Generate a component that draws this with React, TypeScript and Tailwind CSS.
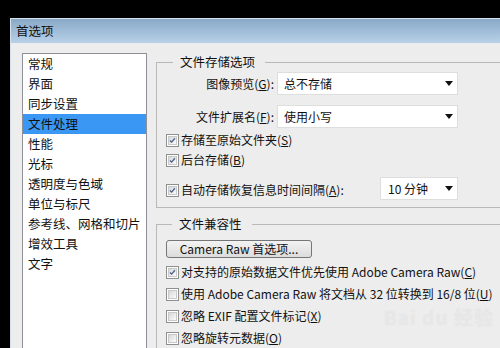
import React from "react";

const FONT = '"Noto Sans CJK SC", "Noto Sans", sans-serif';

function Check({ checked }: { checked?: boolean }) {
  return (
    <div className="w-[13px] h-[13px] shrink-0 border border-[#8e8f8f] bg-white p-[1px]">
      <div className="w-full h-full border border-[#c9c9c9] bg-gradient-to-br from-[#d8d8d8] to-[#fbfbfb] flex items-center justify-center">
        {checked && (
          <svg width="9" height="9" viewBox="0 0 9 9">
            <path d="M1.3 4.4 L3.4 6.6 L7.6 1.6" fill="none" stroke="#4a5e8a" strokeWidth="1.7" />
          </svg>
        )}
      </div>
    </div>
  );
}

function Arrow() {
  return (
    <svg width="8" height="5" viewBox="0 0 8 5" className="shrink-0">
      <path d="M0 0 H8 L4 5 Z" fill="#111" />
    </svg>
  );
}

function Select({ text, w, pl }: { text: string; w: string; pl: string }) {
  return (
    <div className={`${w} h-[23px] bg-white border border-[#dedede] flex items-center ${pl} pr-[4px]`}>
      <span className="flex-1 text-[12px] leading-[16px] text-[#111]">{text}</span>
      <Arrow />
    </div>
  );
}

function CheckRow({ checked, children, h = "h-[20px]" }: { checked?: boolean; children: React.ReactNode; h?: string }) {
  return (
    <div className={`${h} flex items-center gap-[2px] whitespace-nowrap`}>
      <Check checked={checked} />
      <span className="text-[12px] leading-[16px] text-[#111]">{children}</span>
    </div>
  );
}

const items = [
  "常规",
  "界面",
  "同步设置",
  "文件处理",
  "性能",
  "光标",
  "透明度与色域",
  "单位与标尺",
  "参考线、网格和切片",
  "增效工具",
  "文字",
];

export default function App() {
  return (
    <div
      className="w-[500px] h-[348px] bg-black overflow-hidden pl-[10px] pt-[18px] relative"
      style={{ fontFamily: FONT }}
    >
      <div className="w-[520px] h-[360px] flex flex-col border-l border-t border-[#d6e0ea] bg-[#ededed]">
        <div className="h-[24px] shrink-0 bg-gradient-to-b from-[#88a9c7] to-[#b8d1e9] flex items-center pl-[5px] text-[12.5px] text-[#111] leading-none">
          首选项
        </div>
        <div className="flex flex-1 pt-[10px] pl-[11px] gap-[9px]">
          {/* left list */}
          <div className="w-[125px] shrink-0 bg-white border border-[#8d9096] self-stretch">
            {items.map((t, i) => (
              <div
                key={t}
                className={`h-[20px] flex items-center pl-[5px] text-[12.5px] leading-[16px] ${
                  i === 3 ? "bg-[#3a97f4] text-[#111]" : "text-[#111]"
                }`}
              >
                {t}
              </div>
            ))}
          </div>

          {/* right */}
          <div className="flex flex-col pt-[1px]">
            <fieldset className="w-[354px] border border-[#b8b8b8] flex flex-col pl-[9px] pt-[2px] pb-[7px]">
              <legend className="ml-[7px] pl-[7px] pr-[10px] text-[12.5px] leading-[16px] text-[#111]">
                文件存储选项
              </legend>
              <div className="w-[292px] h-[23px] flex items-center">
                <span className="w-[108px] text-right text-[12px] leading-[16px] text-[#111] whitespace-nowrap">
                  图像预览(<u>G</u>):
                </span>
                <div className="ml-[3px]">
                  <Select text="总不存储" w="w-[181px]" pl="pl-[6px]" />
                </div>
              </div>
              <div className="w-[292px] h-[23px] mt-[10px] flex items-center">
                <span className="w-[108px] text-right text-[12px] leading-[16px] text-[#111] whitespace-nowrap">
                  文件扩展名(<u>F</u>):
                </span>
                <div className="ml-[3px]">
                  <Select text="使用小写" w="w-[181px]" pl="pl-[6px]" />
                </div>
              </div>
              <div className="mt-[2px]">
                <CheckRow checked>
                  存储至原始文件夹(<u>S</u>)
                </CheckRow>
              </div>
              <CheckRow checked>
                后台存储(<u>B</u>)
              </CheckRow>
              <div className="w-[292px] h-[23px] mt-[7px] flex items-center">
                <div className="flex-1 flex items-center gap-[2px] whitespace-nowrap pt-[3px]">
                  <Check checked />
                  <span className="text-[12px] leading-[16px] text-[#111]">
                    自动存储恢复信息时间间隔(<u>A</u>):
                  </span>
                </div>
                <Select text="10 分钟" w="w-[78px]" pl="pl-[7px]" />
              </div>
            </fieldset>

            <fieldset className="mt-[8px] w-[354px] border border-[#b8b8b8] flex flex-col pl-[9px] pb-[10px]">
              <legend className="ml-[6px] pl-[7px] pr-[10px] text-[12.5px] leading-[16px] text-[#111]">
                文件兼容性
              </legend>
              <div className="mt-[8px] w-[146px] h-[18px] rounded-[3px] border border-[#767676] bg-gradient-to-b from-[#f3f3f3] to-[#dcdcdc] flex items-center justify-center text-[12px] leading-[16px] text-[#111] whitespace-nowrap">
                Camera Raw 首选项...
              </div>
              <div className="mt-[3px]">
                <CheckRow checked h="h-[22px]">
                  对支持的原始数据文件优先使用 Adobe Camera Raw(<u>C</u>)
                </CheckRow>
              </div>
              <CheckRow h="h-[22px]">
                使用 Adobe Camera Raw 将文档从 32 位转换到 16/8 位(<u>U</u>)
              </CheckRow>
              <CheckRow h="h-[22px]">
                忽略 EXIF 配置文件标记(<u>X</u>)
              </CheckRow>
              <CheckRow h="h-[22px]">
                忽略旋转元数据(<u>O</u>)
              </CheckRow>
            </fieldset>
          </div>
        </div>
      </div>
      <div className="absolute left-[384px] top-[307px] text-[19px] font-bold leading-none text-white/40 tracking-[1px] pointer-events-none [text-shadow:0_0_1px_#d8d8d8]">
        Bai du 经验
      </div>
    </div>
  );
}
